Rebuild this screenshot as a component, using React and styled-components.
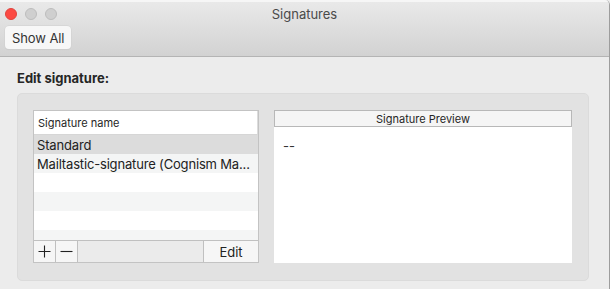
import React from "react";
import styled, { createGlobalStyle } from "styled-components";

const Global = createGlobalStyle`
  html, body { margin: 0; padding: 0; background: #ececec; }
  body { font-family: Inter, "Liberation Sans", sans-serif; -webkit-font-smoothing: antialiased; }
  * { box-sizing: border-box; }
`;

const Window = styled.div`
  width: 610px;
  height: 289px;
  display: flex;
  flex-direction: column;
  background: #ececec;
  border-right: 1px solid #9d9d9d;
  border-top-right-radius: 5px;
  overflow: hidden;
  color: #1f1f1f;
`;

const TitleBar = styled.div`
  height: 57px;
  flex: none;
  display: flex;
  flex-direction: column;
  background: linear-gradient(#e9e9e9, #d2d2d2);
  border-top: 2px solid #f6f6f6;
  border-bottom: 1px solid #b4b4b4;
  padding: 4px 0 0 5px;
`;

const TopRow = styled.div`
  display: grid;
  grid-template-columns: 1fr auto 1fr;
  align-items: center;
  height: 15px;
`;

const Lights = styled.div`
  display: flex;
  gap: 8px;
`;

const Light = styled.span`
  width: 12px;
  height: 12px;
  border-radius: 50%;
  background: ${(p) => (p.$red ? "#fc4a43" : "#cfcfcf")};
  border: 1px solid ${(p) => (p.$red ? "#e0443e" : "#bdbdbd")};
`;

const Title = styled.div`
  font-size: 13px;
  color: #4a4a4a;
  margin-left: -5px;
`;

const Toolbar = styled.div`
  display: flex;
  padding-top: 5px;
`;

const ToolButton = styled.button`
  height: 23px;
  padding: 0 7px;
  font: inherit;
  font-size: 13px;
  letter-spacing: -0.1px;
  color: #333;
  background: #f7f7f7;
  border: none;
  border-radius: 4px;
  box-shadow: 0 0 0 0.5px #d0d0d0, 0 1px 1px rgba(0,0,0,0.06);
`;

const Content = styled.div`
  flex: 1;
  min-height: 0;
  padding: 12px 20px 8px 17px;
  display: flex;
  flex-direction: column;
`;

const Heading = styled.div`
  font-weight: 700;
  font-size: 13px;
  color: #262626;
  height: 16px;
  margin-bottom: 8px;
  padding-top: 1px;
`;

const Group = styled.div`
  flex: 1;
  min-height: 0;
  background: #e2e2e2;
  border: 1px solid #dbdbdb;
  border-radius: 5px;
  padding: 16px 16px 17px 15px;
  display: flex;
  gap: 15px;
`;

const Table = styled.div`
  width: 226px;
  min-height: 0;
  display: flex;
  flex-direction: column;
  background: #fff;
  border: 1px solid #c3c3c3;
`;

const TableHeader = styled.div`
  height: 24px;
  flex: none;
  display: flex;
  align-items: center;
  padding-left: 4px;
  font-size: 11px;
  color: #262626;
  background: #fff;
  border-bottom: 1px solid #d6d6d6;
  border-right: 1px solid #dcdcdc;
`;

const Rows = styled.div`
  flex: 1;
  min-height: 0;
  overflow: hidden;
  display: flex;
  flex-direction: column;
`;

const Row = styled.div`
  height: 19px;
  flex: none;
  display: flex;
  align-items: center;
  padding-left: 3px;
  font-size: 13px;
  letter-spacing: -0.17px;
  color: #222;
  white-space: nowrap;
  background: ${(p) => (p.$selected ? "#dcdcdc" : p.$alt ? "#f4f5f5" : "#fff")};
`;

const BottomBar = styled.div`
  height: 22px;
  flex: none;
  display: flex;
  background: #ebebeb;
  border-top: 1px solid #c0c0c0;
`;

const SquareButton = styled.button`
  width: 22px;
  height: 21px;
  padding: 0;
  display: flex;
  align-items: center;
  justify-content: center;
  background: #f6f6f6;
  border: none;
  border-right: 1px solid #c0c0c0;
`;

const Spacer = styled.div`
  flex: 1;
`;

const EditButton = styled.button`
  width: 55px;
  height: 21px;
  padding: 0;
  font: inherit;
  font-size: 13px;
  color: #222;
  background: #f6f6f6;
  border: none;
  border-left: 1px solid #c0c0c0;
`;

const Preview = styled.div`
  flex: 1;
  display: flex;
  flex-direction: column;
  background: #fff;
`;

const PreviewHeader = styled.div`
  height: 17px;
  flex: none;
  display: flex;
  align-items: center;
  justify-content: center;
  font-size: 11px;
  color: #262626;
  background: #f5f5f5;
  border: 1px solid #b8b8b8;
`;

const PreviewBody = styled.div`
  flex: 1;
  padding: 11px 0 0 9px;
  font-size: 13px;
  color: #333;
`;

const Plus = () => (
  <svg width="13" height="13" viewBox="0 0 13 13">
    <path d="M6.5 0.5v12M0.5 6.5h12" stroke="#222" strokeWidth="1.1" fill="none" />
  </svg>
);

const Minus = () => (
  <svg width="13" height="13" viewBox="0 0 13 13">
    <path d="M0.5 6.5h12" stroke="#222" strokeWidth="1.1" fill="none" />
  </svg>
);

export default function App() {
  const rows = [
    { name: "Standard", selected: true },
    { name: "Mailtastic-signature (Cognism Ma..." },
    { name: "" },
    { name: "" },
    { name: "" },
    { name: "" },
  ];
  return (
    <>
      <Global />
      <Window>
        <TitleBar>
          <TopRow>
            <Lights>
              <Light $red />
              <Light />
              <Light />
            </Lights>
            <Title>Signatures</Title>
            <div />
          </TopRow>
          <Toolbar>
            <ToolButton>Show All</ToolButton>
          </Toolbar>
        </TitleBar>
        <Content>
          <Heading>Edit signature:</Heading>
          <Group>
            <Table>
              <TableHeader>Signature name</TableHeader>
              <Rows>
                {rows.map((r, i) => (
                  <Row key={i} $selected={r.selected} $alt={i % 2 === 1}>
                    {r.name}
                  </Row>
                ))}
              </Rows>
              <BottomBar>
                <SquareButton aria-label="Add"><Plus /></SquareButton>
                <SquareButton aria-label="Remove"><Minus /></SquareButton>
                <Spacer />
                <EditButton>Edit</EditButton>
              </BottomBar>
            </Table>
            <Preview>
              <PreviewHeader>Signature Preview</PreviewHeader>
              <PreviewBody>--</PreviewBody>
            </Preview>
          </Group>
        </Content>
      </Window>
    </>
  );
}
